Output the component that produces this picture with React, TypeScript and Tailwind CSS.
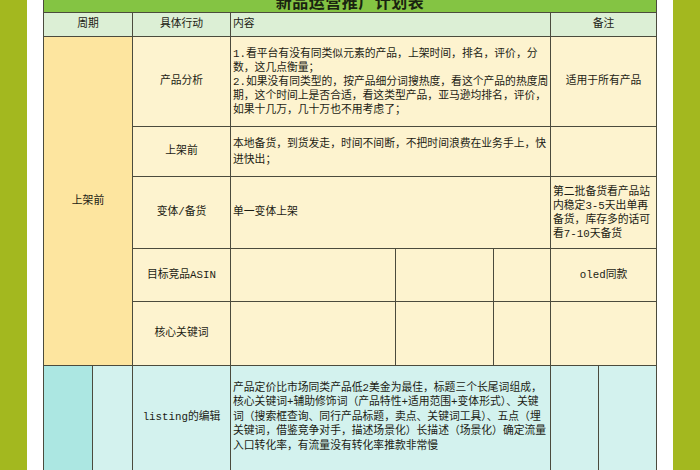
import React from "react";

const F = { fontFamily: '"Liberation Mono", "Noto Sans CJK SC", monospace' };

function Cell({
  className = "",
  children,
}: {
  className?: string;
  children?: React.ReactNode;
}) {
  return (
    <div className={"flex items-center text-[10.8px] text-[#1c1c14] " + className}>
      {children}
    </div>
  );
}

const cream = "bg-[#fdf3cf]";
const cyan = "bg-[#d3f2ee]";

export default function App() {
  return (
    <div className="flex w-[700px] h-[470px] overflow-hidden bg-white" style={F}>
      <div className="w-[27px] shrink-0 bg-[#a3b81f]" />
      <div className="w-[16px] shrink-0" />
      <div
        className="grid shrink-0 gap-px bg-[#4b4b3d] px-px pb-px self-start"
        style={{
          gridTemplateColumns: "48px 39px 97px 164px 97px 56px 47px 57px",
          gridTemplateRows: "12px 23px 89px 49px 71px 52px 63px 130px",
        }}
      >
        {/* orange merged period cell */}
        <div className="col-start-1 col-span-2 row-start-3 row-span-5 flex items-center justify-center bg-[#fde59f] text-[10.8px] text-[#1c1c14]">
          上架前
        </div>

        {/* title */}
        <div className="col-span-8 h-[12px] overflow-hidden flex items-end justify-center bg-[#84c443]">
          <span
            className="text-[16px] leading-[18px] font-bold text-[#1a2410] mb-[2px] tracking-[0.5px]"
            style={{ fontFamily: '"Noto Sans CJK SC", sans-serif' }}
          >
            新品运营推广计划表
          </span>
        </div>

        {/* header */}
        <Cell className="col-span-2 justify-center bg-[#dcefd5]">周期</Cell>
        <Cell className="justify-center bg-[#dcefd5]">具体行动</Cell>
        <Cell className="col-span-3 pl-[2px] bg-[#dcefd5]">内容</Cell>
        <Cell className="col-span-2 justify-center bg-[#dcefd5]">备注</Cell>

        {/* row 1 */}
        <Cell className={"justify-center " + cream}>产品分析</Cell>
        <Cell className={"col-span-3 pl-[2px] whitespace-nowrap leading-[14px] " + cream}>
          <div>
            1.看平台有没有同类似元素的产品，上架时间，排名，评价，分
            <br />
            数，这几点衡量；
            <br />
            2.如果没有同类型的，按产品细分词搜热度，看这个产品的热度周
            <br />
            期，这个时间上是否合适，看这类型产品，亚马逊均排名，评价，
            <br />
            如果十几万，几十万也不用考虑了；
          </div>
        </Cell>
        <Cell className={"col-span-2 justify-center " + cream}>适用于所有产品</Cell>

        {/* row 2 */}
        <Cell className={"justify-center " + cream}>上架前</Cell>
        <Cell className={"col-span-3 pl-[2px] whitespace-nowrap leading-[16px] " + cream}>
          <div>
            本地备货，到货发走，时间不间断，不把时间浪费在业务手上，快
            <br />
            进快出；
          </div>
        </Cell>
        <Cell className={"col-span-2 " + cream} />

        {/* row 3 */}
        <Cell className={"justify-center " + cream}>变体/备货</Cell>
        <Cell className={"col-span-3 pl-[2px] " + cream}>单一变体上架</Cell>
        <Cell className={"col-span-2 pl-[2px] whitespace-nowrap leading-[14px] " + cream}>
          <div>
            第二批备货看产品站
            <br />
            内稳定3-5天出单再
            <br />
            备货，库存多的话可
            <br />
            看7-10天备货
          </div>
        </Cell>

        {/* row 4 */}
        <Cell className={"justify-center " + cream}>目标竞品ASIN</Cell>
        <Cell className={cream} />
        <Cell className={cream} />
        <Cell className={cream} />
        <Cell className={"col-span-2 justify-center " + cream}>oled同款</Cell>

        {/* row 5 */}
        <Cell className={"justify-center " + cream}>核心关键词</Cell>
        <Cell className={cream} />
        <Cell className={cream} />
        <Cell className={cream} />
        <Cell className={"col-span-2 " + cream} />

        {/* listing row */}
        <Cell className="bg-[#ace7e2]" />
        <Cell className={cyan} />
        <Cell className={"justify-center pb-[28px] " + cyan}>listing的编辑</Cell>
        <Cell className={"col-span-3 pl-[2px] pb-[28px] whitespace-nowrap leading-[14.5px] " + cyan}>
          <div>
            产品定价比市场同类产品低2美金为最佳，标题三个长尾词组成，
            <br />
            核心关键词+辅助修饰词（产品特性+适用范围+变体形式）、关键
            <br />
            词（搜索框查询、同行产品标题，卖点、关键词工具）、五点（埋
            <br />
            关键词，借鉴竞争对手，描述场景化）长描述（场景化）确定流量
            <br />
            入口转化率，有流量没有转化率推款非常慢
          </div>
        </Cell>
        <Cell className={cyan} />
        <Cell className={cyan} />
      </div>
      <div className="w-[16px] shrink-0" />
      <div className="w-[27px] shrink-0 bg-[#a3b81f]" />
    </div>
  );
}
